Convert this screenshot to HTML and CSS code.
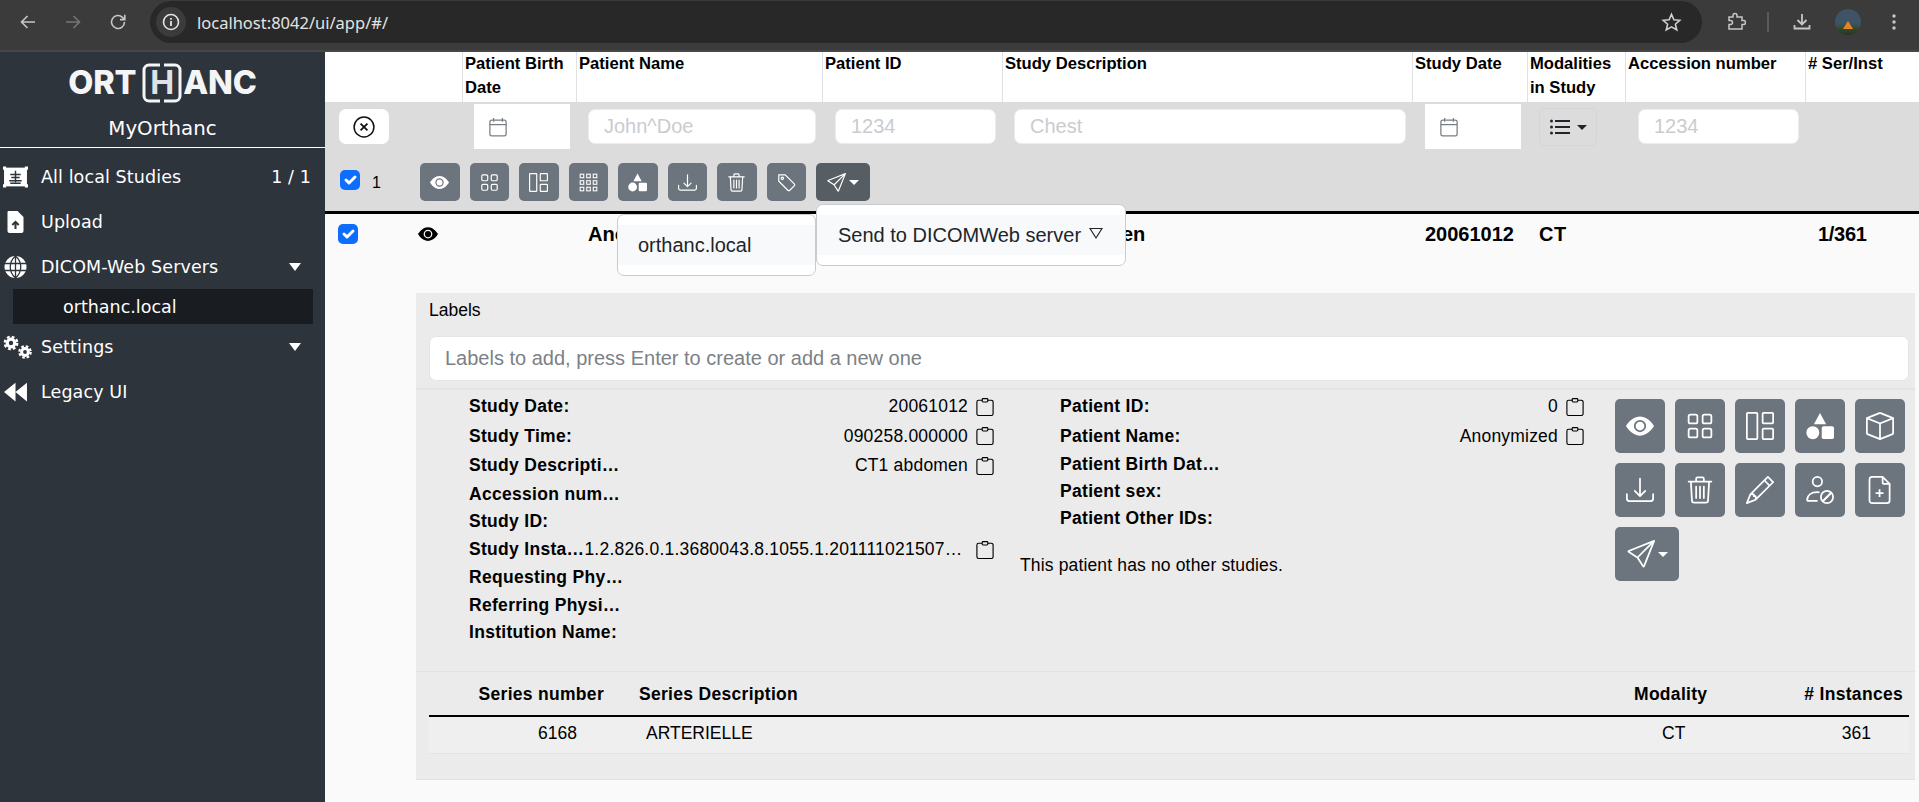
FILE: index.html
```html
<!DOCTYPE html>
<html lang="en">
<head>
<meta charset="utf-8">
<title>Orthanc</title>
<link rel="stylesheet" href="styles.css">
</head>
<body>
<svg class="defs" width="0" height="0">
  <defs>
    <symbol id="i-eye" viewBox="0 0 16 16"><path fill="currentColor" d="M10.5 8a2.5 2.5 0 1 1-5 0 2.5 2.5 0 0 1 5 0z"/><path fill="currentColor" d="M0 8s3-5.5 8-5.500S16 8 16 8s-3 5.500-8 5.500S0 8 0 8zm8 3.500a3.500 3.500 0 1 0 0-7 3.500 3.500 0 0 0 0 7z"/></symbol>
    <symbol id="i-grid" viewBox="0 0 16 16"><g fill="none" stroke="currentColor"><rect x="1.500" y="1.500" width="5" height="5" rx="1"/><rect x="9.500" y="1.500" width="5" height="5" rx="1"/><rect x="1.500" y="9.500" width="5" height="5" rx="1"/><rect x="9.500" y="9.500" width="5" height="5" rx="1"/></g></symbol>
    <symbol id="i-layout" viewBox="0 0 16 16"><g fill="none" stroke="currentColor"><rect x=".5" y=".5" width="6" height="15" rx=".5"/><rect x="9.500" y=".5" width="6" height="6" rx=".5"/><rect x="9.500" y="9.500" width="6" height="6" rx=".5"/></g></symbol>
    <symbol id="i-grid3" viewBox="0 0 16 16"><g fill="none" stroke="currentColor" stroke-width=".9"><rect x="1" y="1" width="3" height="3"/><rect x="6.500" y="1" width="3" height="3"/><rect x="12" y="1" width="3" height="3"/><rect x="1" y="6.500" width="3" height="3"/><rect x="6.500" y="6.500" width="3" height="3"/><rect x="12" y="6.500" width="3" height="3"/><rect x="1" y="12" width="3" height="3"/><rect x="6.500" y="12" width="3" height="3"/><rect x="12" y="12" width="3" height="3"/></g></symbol>
    <symbol id="i-shapes" viewBox="0 0 16 16"><g fill="currentColor"><path d="M8 .5 11.500 7h-7z"/><circle cx="3.900" cy="11.800" r="3.700"/><rect x="9" y="8.200" width="7" height="7.200" rx="1"/></g></symbol>
    <symbol id="i-cube" viewBox="0 0 16 16"><path fill="currentColor" d="M8.186 1.113a.5.5 0 0 0-.372 0L1.846 3.500 8 5.961 14.154 3.500 8.186 1.113zM15 4.239l-6.500 2.600v7.922l6.500-2.600V4.240zM7.500 14.762V6.838L1 4.239v7.925l6.500 2.600zM7.443.184a1.500 1.500 0 0 1 1.114 0l7.129 2.852A.5.5 0 0 1 16 3.500v8.662a1 1 0 0 1-.629.928l-7.185 2.874a.5.5 0 0 1-.372 0L.63 13.090a1 1 0 0 1-.63-.928V3.500a.5.5 0 0 1 .314-.464L7.443.184z"/></symbol>
    <symbol id="i-download" viewBox="0 0 16 16"><path fill="currentColor" d="M.5 9.900a.5.5 0 0 1 .5.5v2.500a1 1 0 0 0 1 1h12a1 1 0 0 0 1-1v-2.500a.5.5 0 0 1 1 0v2.500a2 2 0 0 1-2 2H2a2 2 0 0 1-2-2v-2.500a.5.5 0 0 1 .5-.5z"/><path fill="currentColor" d="M7.646 11.854a.5.5 0 0 0 .708 0l3-3a.5.5 0 0 0-.708-.708L8.500 10.293V1.500a.5.5 0 0 0-1 0v8.793L5.354 8.146a.5.5 0 1 0-.708.708l3 3z"/></symbol>
    <symbol id="i-trash" viewBox="0 0 16 16"><g fill="none" stroke="currentColor" stroke-linecap="round"><path d="M1.500 3.200h13M5.800 3V1.600c0-.5.3-.8.8-.8h2.800c.5 0 .8.3.8.8V3"/><path d="M2.800 3.400 3.400 14c0 .7.5 1.200 1.200 1.200h6.800c.7 0 1.200-.5 1.200-1.200l.6-10.600"/><path d="M5.800 6v6.600M8 6v6.600M10.200 6v6.600"/></g></symbol>
    <symbol id="i-pencil" viewBox="0 0 16 16"><path fill="currentColor" d="M12.146.146a.5.5 0 0 1 .708 0l3 3a.5.5 0 0 1 0 .708l-10 10a.5.5 0 0 1-.168.11l-5 2a.5.5 0 0 1-.65-.65l2-5a.5.5 0 0 1 .11-.168l10-10zM11.207 2.500 13.500 4.793 14.793 3.500 12.500 1.207 11.207 2.500zm1.586 3L10.500 3.207 4 9.707V10h.5a.5.5 0 0 1 .5.5v.5h.5a.5.5 0 0 1 .5.5v.5h.293l6.500-6.500zm-9.761 5.175-.106.106-1.528 3.821 3.821-1.528.106-.106A.5.5 0 0 1 5 12.500V12h-.5a.5.5 0 0 1-.5-.5V11h-.5a.5.5 0 0 1-.468-.325z"/></symbol>
    <symbol id="i-user" viewBox="0 0 16 16"><g fill="none" stroke="currentColor"><circle cx="6.500" cy="3.200" r="2.700"/><path d="M.6 14.200c0-3.200 2.400-5 5.700-5 .6 0 1 .1 1.400.2M.6 14.200h6"/><circle cx="12" cy="12" r="3.500"/><path d="m9.600 14.400 4.800-4.800" stroke-width="1.200"/></g></symbol>
    <symbol id="i-fileplus" viewBox="0 0 16 16"><g fill="none" stroke="currentColor"><path d="M3.500.5h6l4 4v9.500c0 .8-.7 1.500-1.500 1.500H3.500C2.700 15.500 2 14.800 2 14V2C2 1.200 2.700.5 3.500.5z"/><path d="M9.500.5v3c0 .6.400 1 1 1h3"/><path d="M7.750 7.500v4.500M5.500 9.750H10"/></g></symbol>
    <symbol id="i-tag" viewBox="0 0 16 16"><g fill="none" stroke="currentColor"><path d="M1.500 1.500h5.400l7.600 7.600c.5.500.5 1.200 0 1.700l-3.700 3.700c-.5.500-1.200.5-1.700 0L1.500 6.900z"/><circle cx="4.500" cy="4.500" r="1"/></g></symbol>
    <symbol id="i-send" viewBox="0 0 16 16"><path fill="currentColor" d="M15.854.146a.5.5 0 0 1 .11.54l-5.819 14.547a.75.75 0 0 1-1.329.124l-3.178-4.995L.643 7.184a.75.75 0 0 1 .124-1.330L15.314.037a.5.5 0 0 1 .54.11ZM6.636 10.070l2.761 4.338L14.130 2.576 6.636 10.070Zm6.787-8.201L1.591 6.602l4.339 2.760 7.494-7.493Z"/></symbol>
    <symbol id="i-cal" viewBox="0 0 16 16"><g fill="none" stroke="currentColor"><rect x="1.500" y="2.500" width="13" height="12.500" rx="1.500"/><path d="M1.500 6h13M4.500 .8v3M11.500 .8v3"/></g></symbol>
    <symbol id="i-clip" viewBox="0 0 16 16"><g fill="none" stroke="currentColor"><path d="M5.500 2H2.300C1.500 2 .8 2.700.8 3.500V14c0 .8.700 1.500 1.500 1.500h11.400c.8 0 1.500-.7 1.500-1.500V3.500c0-.8-.7-1.500-1.500-1.500h-3.200"/><rect x="5.500" y=".5" width="5" height="3" rx=".8"/></g></symbol>
  </defs>
</svg>

<header class="browser">
  <div class="nav-icons">
    <svg class="b-ic" viewBox="0 0 20 20"><path d="M17 10H4M9.500 4 3.500 10l6 6" fill="none" stroke="#c7c7c7" stroke-width="1.600"/></svg>
    <svg class="b-ic" viewBox="0 0 20 20"><path d="M3 10h13M10.500 4l6 6-6 6" fill="none" stroke="#757575" stroke-width="1.600"/></svg>
    <svg class="b-ic" viewBox="0 0 20 20"><path d="M16.500 10a6.500 6.500 0 1 1-2-4.700L16.500 7.300M16.800 2.800v4.800H12" fill="none" stroke="#c7c7c7" stroke-width="1.600"/></svg>
  </div>
  <div class="urlbar">
    <span class="site-info"><svg viewBox="0 0 20 20" class="info-ic"><circle cx="10" cy="10" r="7.500" fill="none" stroke="#e3e3e3" stroke-width="1.600"/><path d="M10 9v5M10 6v1.800" stroke="#e3e3e3" stroke-width="1.800"/></svg></span>
    <span class="url">localhost:8042/ui/app/#/</span>
    <svg class="star" viewBox="0 0 20 20"><path d="m10 2.200 2.300 5.200 5.600.5-4.200 3.700 1.300 5.500L10 14.200l-5 2.900 1.300-5.500L2.100 7.900l5.600-.5z" fill="none" stroke="#d0d0d0" stroke-width="1.500"/></svg>
  </div>
  <div class="br-right">
    <svg class="b-ic" viewBox="0 0 20 20"><path d="M3 5h4V3.500a2 2 0 0 1 4 0V5h5v3.500h1.500a2 2 0 0 1 0 4H16V17H3v-4.500h1.500a2 2 0 0 0 0-4H3z" fill="none" stroke="#c7c7c7" stroke-width="1.500"/></svg>
    <span class="br-sep"></span>
    <svg class="b-ic" viewBox="0 0 20 20"><path d="M10 2v10M5.500 8l4.500 4.500L14.500 8M2.500 13v3.500h15V13" fill="none" stroke="#c7c7c7" stroke-width="1.800"/></svg>
    <span class="avatar"><span class="fire"></span></span>
    <svg class="b-ic dots" viewBox="0 0 20 20"><circle cx="10" cy="4" r="1.700" fill="#c7c7c7"/><circle cx="10" cy="10" r="1.700" fill="#c7c7c7"/><circle cx="10" cy="16" r="1.700" fill="#c7c7c7"/></svg>
  </div>
</header>

<div class="app">
  <aside class="sidebar">
    <div class="logo">
      <span class="logo-t">ORT</span>
      <span class="logo-h">
        <svg class="logo-br" viewBox="0 0 40 40"><path d="M18 2H7a5 5 0 0 0-5 5v26a5 5 0 0 0 5 5h11M22 2h11a5 5 0 0 1 5 5v26a5 5 0 0 1-5 5H22" fill="none" stroke="#f4f5f6" stroke-width="3"/></svg>
        <span class="logo-hl">H</span>
      </span>
      <span class="logo-t">ANC</span>
    </div>
    <div class="site-name">MyOrthanc</div>
    <nav class="menu">
      <a class="item"><svg class="s-ic" viewBox="0 0 24 22"><path fill="#fff" d="M1 2h22v18H1z"/><path fill="#fff" d="M0 1h3v3H0zM21 1h3v3h-3zM0 18h3v3H0zM21 18h3v3h-3z"/><path d="M12 5v11M7 8.500h10M8 11.500h8M6 14.500h12M7 17h10" stroke="#2e343c" stroke-width="1.400" fill="none"/></svg><span class="grow">All local Studies</span><span>1 / 1</span></a>
      <a class="item"><svg class="s-ic" viewBox="0 0 22 24"><path fill="#fff" d="M4 1h9l6 6v14c0 1-1 2-2 2H5c-1 0-2-1-2-2V3c0-1 0-2 1-2z"/><path d="M11 19v-7M7.800 15l3.200-3.200 3.200 3.200" fill="none" stroke="#2e343c" stroke-width="2"/></svg><span class="grow">Upload</span></a>
      <a class="item"><svg class="s-ic" viewBox="0 0 24 24"><circle cx="12" cy="12" r="11" fill="#fff"/><path d="M1 8.500h22M1 15.500h22M12 1v22M12 1c-7 6-7 16 0 22M12 1c7 6 7 16 0 22" fill="none" stroke="#2e343c" stroke-width="1.300"/></svg><span class="grow">DICOM-Web Servers</span><span class="caret"></span></a>
      <a class="sub">orthanc.local</a>
      <a class="item"><svg class="s-ic cogs" viewBox="0 0 30 24"><g fill="none" stroke="#fff"><circle cx="8" cy="8" r="3.800" stroke-width="3.200"/><circle cx="8" cy="8" r="6.200" stroke-width="2.400" stroke-dasharray="2.800 2.070"/><circle cx="22" cy="17" r="3.400" stroke-width="3"/><circle cx="22" cy="17" r="5.700" stroke-width="2.200" stroke-dasharray="2.600 1.880"/></g></svg><span class="grow">Settings</span><span class="caret"></span></a>
      <a class="item"><svg class="s-ic" viewBox="0 0 24 20"><path fill="#fff" d="M12 1v18L1 10zM23 1v18L12 10z"/></svg><span class="grow">Legacy UI</span></a>
    </nav>
  </aside>

  <main class="main">
    <div class="cols head">
      <div class="h"></div><div class="h">Patient Birth Date</div><div class="h">Patient Name</div><div class="h">Patient ID</div><div class="h">Study Description</div><div class="h">Study Date</div><div class="h">Modalities in Study</div><div class="h">Accession number</div><div class="h"># Ser/Inst</div>
    </div>

    <div class="filters">
      <div class="cols filter-row">
        <div class="f f-clear"><button class="clear"><svg width="22" height="22" viewBox="0 0 16 16"><circle cx="8" cy="8" r="7.200" fill="none" stroke="#111" stroke-width="1.100"/><path d="m5.500 5.500 5 5M10.500 5.500l-5 5" stroke="#111" stroke-width="1.300"/></svg></button></div>
        <div class="f f-date"><div class="date"><svg class="cal"><use href="#i-cal"/></svg></div></div>
        <div class="f f-in"><input class="inp" placeholder="John^Doe"></div>
        <div class="f f-in"><input class="inp" placeholder="1234"></div>
        <div class="f f-in"><input class="inp" placeholder="Chest"></div>
        <div class="f f-date f-date2"><div class="date"><svg class="cal"><use href="#i-cal"/></svg></div></div>
        <div class="f f-mod"><button class="mod"><svg width="20" height="18" viewBox="0 0 16 14"><path d="M4 2.200h12M4 7h12M4 11.800h12" stroke="#212529" stroke-width="1.700"/><circle cx="1.200" cy="2.200" r="1.200" fill="#212529"/><circle cx="1.200" cy="7" r="1.200" fill="#212529"/><circle cx="1.200" cy="11.800" r="1.200" fill="#212529"/></svg><span class="tri dark"></span></button></div>
        <div class="f f-acc"><input class="inp" placeholder="1234"></div>
        <div></div>
      </div>
      <div class="toolbar">
        <span class="check sel-all"></span><span class="count">1</span>
        <div class="tbtns">
          <button class="btn"><svg class="ti"><use href="#i-eye"/></svg></button>
          <button class="btn"><svg class="ti"><use href="#i-grid"/></svg></button>
          <button class="btn"><svg class="ti"><use href="#i-layout"/></svg></button>
          <button class="btn"><svg class="ti"><use href="#i-grid3"/></svg></button>
          <button class="btn"><svg class="ti"><use href="#i-shapes"/></svg></button>
          <button class="btn"><svg class="ti"><use href="#i-download"/></svg></button>
          <button class="btn"><svg class="ti"><use href="#i-trash"/></svg></button>
          <button class="btn"><svg class="ti"><use href="#i-tag"/></svg></button>
          <button class="btn btn-send active"><svg class="ti"><use href="#i-send"/></svg><span class="tri"></span></button>
        </div>
      </div>
    </div>

    <div class="study">
      <div class="cols study-row">
        <div class="c-first"><span class="check row-check"></span><svg class="row-eye"><use href="#i-eye"/></svg></div>
        <div></div><div class="pad-a">Anonymized</div><div>0</div><div class="pad-d">CT1 abdomen</div><div class="pad-e">20061012</div><div class="pad-m">CT</div><div></div><div class="pad-s">1/361</div>
      </div>

      <div class="panel">
        <div class="labels-title">Labels</div>
        <input class="labels-in" placeholder="Labels to add, press Enter to create or add a new one">
        <div class="info">
          <div class="study-col">
            <div class="kv"><b>Study Date:</b><span>20061012</span><svg class="clip"><use href="#i-clip"/></svg></div>
            <div class="kv"><b>Study Time:</b><span>090258.000000</span><svg class="clip"><use href="#i-clip"/></svg></div>
            <div class="kv"><b>Study Descripti…</b><span>CT1 abdomen</span><svg class="clip"><use href="#i-clip"/></svg></div>
            <div class="kv short"><b>Accession num…</b></div>
            <div class="kv short"><b>Study ID:</b></div>
            <div class="kv"><b>Study Insta…</b><span class="uid">1.2.826.0.1.3680043.8.1055.1.201111021507…</span><svg class="clip"><use href="#i-clip"/></svg></div>
            <div class="kv short"><b>Requesting Phy…</b></div>
            <div class="kv short"><b>Referring Physi…</b></div>
            <div class="kv short"><b>Institution Name:</b></div>
          </div>
          <div class="patient-col">
            <div class="kv"><b>Patient ID:</b><span>0</span><svg class="clip"><use href="#i-clip"/></svg></div>
            <div class="kv"><b>Patient Name:</b><span>Anonymized</span><svg class="clip"><use href="#i-clip"/></svg></div>
            <div class="kv short"><b>Patient Birth Dat…</b></div>
            <div class="kv short"><b>Patient sex:</b></div>
            <div class="kv short"><b>Patient Other IDs:</b></div>
            <p class="no-other">This patient has no other studies.</p>
          </div>
          <div class="actions">
            <button class="btn big"><svg class="bi"><use href="#i-eye"/></svg></button>
            <button class="btn big"><svg class="bi"><use href="#i-grid"/></svg></button>
            <button class="btn big"><svg class="bi"><use href="#i-layout"/></svg></button>
            <button class="btn big"><svg class="bi"><use href="#i-shapes"/></svg></button>
            <button class="btn big"><svg class="bi"><use href="#i-cube"/></svg></button>
            <button class="btn big"><svg class="bi"><use href="#i-download"/></svg></button>
            <button class="btn big"><svg class="bi"><use href="#i-trash"/></svg></button>
            <button class="btn big"><svg class="bi"><use href="#i-pencil"/></svg></button>
            <button class="btn big"><svg class="bi"><use href="#i-user"/></svg></button>
            <button class="btn big"><svg class="bi"><use href="#i-fileplus"/></svg></button>
            <button class="btn big wide"><svg class="bi"><use href="#i-send"/></svg><span class="tri"></span></button>
          </div>
        </div>
        <div class="series">
          <div class="s-cols s-head"><div class="r">Series number</div><div>Series Description</div><div>Modality</div><div class="r"># Instances</div></div>
          <div class="s-cols s-row"><div class="c-num">6168</div><div class="c-desc">ARTERIELLE</div><div class="c-ct">CT</div><div class="c-inst">361</div></div>
        </div>
      </div>
    </div>

    <div class="menu-a"><div class="menu-i a1">orthanc.local</div></div>
    <div class="menu-b"><div class="menu-i b1">Send to DICOMWeb server<span class="hollow"></span></div></div>
  </main>
</div>
</body>
</html>
```

FILE: styles.css
```css
* { box-sizing: border-box; }
html, body { margin: 0; height: 802px; overflow: hidden; }
body { font-family: "Liberation Sans", Arial, sans-serif; color: #000; background: #fafafa; font-size: 17.5px; }
.defs { position: absolute; }
button { font-family: inherit; }

/* browser chrome */
.browser { height: 52px; background: #3b3b3b; border-bottom: 2px solid #474747; display: flex; align-items: flex-start; }
.nav-icons { width: 150px; height: 44px; display: flex; align-items: center; gap: 25px; padding-left: 18px; }
.b-ic { width: 20px; height: 20px; flex: none; }
.urlbar { width: 1552px; height: 42px; margin-top: 1px; background: #282828; border-radius: 21px; display: flex; align-items: center; padding: 0 20px 0 6px; }
.site-info { width: 30px; height: 30px; border-radius: 50%; background: #3b3b3b; display: flex; align-items: center; justify-content: center; }
.info-ic { width: 20px; height: 20px; }
.url { font-family: "Noto Sans", sans-serif; font-size: 16.5px; color: #e3e3e3; margin-left: 11px; flex: 1; }
.star { width: 21px; height: 21px; }
.br-right { flex: 1; height: 44px; display: flex; align-items: center; padding-left: 24px; gap: 0; }
.br-sep { width: 2px; height: 20px; background: #5a5a5a; margin: 0 23px 0 21px; }
.avatar { width: 26px; height: 26px; border-radius: 50%; margin-left: 23px; background: linear-gradient(#3e5366 0 55%, #35492f 75%, #26331f); display: flex; align-items: center; justify-content: center; }
.fire { border: 5px solid transparent; border-bottom: 8px solid #e8841f; border-top: 0; margin-top: 5px; }
.dots { margin-left: 23px; }

.app { display: flex; height: 750px; }

/* sidebar */
.sidebar { width: 325px; flex: none; background: #2e343c; color: #fff; font-family: "DejaVu Sans", sans-serif; }
.logo { height: 61px; display: flex; justify-content: center; align-items: center; font-family: "Inter", sans-serif; }
.logo-t { font-weight: 800; font-size: 32.500px; color: #f4f5f6; letter-spacing: -.2px; line-height: 40px; }
.logo-h { width: 40px; height: 40px; margin: 0 1px 0 6px; display: grid; place-items: center; }
.logo-br, .logo-hl { grid-area: 1 / 1; }
.logo-br { width: 40px; height: 40px; }
.logo-hl { font-weight: 700; font-size: 32px; line-height: 40px; color: #dfe2e6; }
.site-name { height: 35px; text-align: center; font-size: 19.800px; line-height: 32px; border-bottom: 1px solid #fff; }
.menu { display: flex; flex-direction: column; padding-top: 6px; }
.item { height: 45px; display: flex; align-items: center; padding: 0 14px 0 3px; font-size: 17.500px; letter-spacing: .1px; }
.s-ic { width: 25px; height: 24px; flex: none; margin-right: 13px; }
.cogs { width: 30px; margin-right: 8px; }
.grow { flex: 1; }
.caret { border: 6px solid transparent; border-top: 8px solid #fff; border-bottom: 0; margin-right: 10px; }
.sub { margin: 0 12px 0 13px; height: 35px; background: #191c20; display: flex; align-items: center; padding-left: 50px; font-size: 17.500px; }

/* main */
.main { flex: 1; min-width: 0; position: relative; }
.cols { display: grid; grid-template-columns: 137px 114px 246px 180px 410px 115px 98px 180px 114px; }
.head { height: 50px; background: #fff; font-weight: 700; font-size: 16.600px; line-height: 24px; }
.h { padding: 0 2px; border-left: 1px solid #dee2e6; }
.h:first-child { border-left: 0; }

.filters { height: 112px; background: #dcdcdc; border-bottom: 3px solid #000; }
.filter-row { height: 52px; }
.f { display: flex; align-items: flex-start; }
.f-clear { padding: 7px 0 0 14px; }
.clear { width: 50px; height: 35px; border: 0; background: #fff; border-radius: 7px; padding: 0; display: flex; align-items: center; justify-content: center; }
.f-date { padding: 2px 0 0 12px; }
.f-date2 { padding-left: 13px; }
.date { width: 96px; height: 45px; background: #fff; display: flex; align-items: center; padding-left: 14px; }
.cal { width: 20px; height: 20px; color: #7a7f85; }
.f-in { padding: 7px 0 0 12px; }
.f-in:nth-child(4) { padding-left: 13px; }
.f-in:nth-child(5) { padding-left: 12px; }
.f-in .inp { width: 228px; }
.f-in:nth-child(4) .inp { width: 161px; }
.f-in:nth-child(5) .inp { width: 392px; }
.f-mod { padding: 6px 0 0 12px; }
.mod { width: 58px; height: 38px; background: transparent; border: 1px solid #d6d6d6; border-radius: 5px; display: flex; align-items: center; justify-content: center; gap: 7px; padding: 0; }
.f-acc { padding: 7px 0 0 13px; }
.f-acc .inp { width: 161px; }
.inp { height: 35px; border: 1px solid #ececec; border-radius: 7px; background: #fff; padding: 0 15px; font: 20px "Liberation Sans", Arial, sans-serif; outline: 0; }
.inp::placeholder { color: #c9ccd0; opacity: 1; }
.tri { display: inline-block; border: 5px solid transparent; border-top: 5px solid #fff; border-bottom: 0; margin-left: 3px; }
.tri.dark { border-top-color: #212529; margin: 0; }

.toolbar { height: 38px; margin-top: 9px; display: flex; align-items: center; padding-left: 15px; }
.check { display: inline-block; width: 20px; height: 20px; border-radius: 5px; background: #0d6efd url("data:image/svg+xml,%3Csvg xmlns='http://www.w3.org/2000/svg' viewBox='0 0 20 20'%3E%3Cpath fill='none' stroke='%23fff' stroke-linecap='round' stroke-linejoin='round' stroke-width='3' d='m6 10 3 3 6-6'/%3E%3C/svg%3E") center / 100% no-repeat; flex: none; }
.sel-all { margin-top: -4px; }
.count { font-size: 16px; margin-left: 12px; width: 48px; padding-top: 2px; }
.tbtns { display: flex; gap: 10px; }
.btn { width: 39.500px; height: 38px; border: 0; border-radius: 5px; background: #6c757d; color: #fff; padding: 0; display: flex; align-items: center; justify-content: center; flex: none; }
.btn .ti { width: 19px; height: 19px; }
.btn-send { width: 54px; }
.active { background: #565e64; }

.study { height: 585px; }
.study-row { height: 79px; padding-top: 7px; font-weight: 700; font-size: 20px; line-height: 26px; }
.c-first { display: flex; align-items: center; height: 26px; padding-left: 13px; }
.row-eye { width: 20px; height: 20px; margin-left: 60px; }
.pad-a { padding-left: 12px; }
.pad-d { padding-left: 11px; }
.pad-e { padding-left: 13px; }
.pad-m { padding-left: 12px; letter-spacing: .5px; }
.pad-s { padding-left: 13px; letter-spacing: -.3px; }

.panel { margin: 0 4px 0 91px; height: 487px; background: #ebebeb; border-bottom: 1px solid #e1e3e8; padding: 5px 6px 0 13px; }
.labels-title { height: 38px; line-height: 24px; }
.labels-in { display: block; width: 1480px; height: 45px; border: 1px solid #e5e5e5; border-radius: 7px; background: #fff; padding: 0 15px; font: 20px "Liberation Sans", Arial, sans-serif; outline: 0; }
.labels-in::placeholder { color: #7b8186; opacity: 1; }

.info { margin: 7px -6px 0 -13px; height: 284px; border-top: 2px solid #e1e3e8; border-bottom: 1px solid #e1e3e8; display: grid; grid-template-columns: 580px 603px 1fr; padding-top: 2px; }
.study-col { padding: 0 2px 0 53px; }
.patient-col { padding-left: 64px; padding-right: 15px; }
.kv { height: 29.500px; display: flex; align-items: center; font-size: 17.500px; }
.kv.short { height: 27.200px; }
.kv b { flex: 1; white-space: nowrap; letter-spacing: .3px; }
.kv span { white-space: nowrap; letter-spacing: .2px; }
.study-col .kv:has(.uid) b { flex: none; }
.study-col .kv:has(.uid) span { flex: 1; letter-spacing: .22px; }
.clip { width: 18px; height: 18px; margin-left: 8px; color: #000; flex: none; }
.no-other { margin: 19px 0 0 -40px; font-size: 17.500px; line-height: 26px; letter-spacing: .15px; }
.actions { display: flex; flex-wrap: wrap; align-content: flex-start; gap: 10px; padding: 7px 5px 0 16px; }
.big { width: 50px; height: 54px; }
.bi { width: 28px; height: 28px; flex: none; }
.wide { width: 64px; }

.series { padding-top: 7px; }
.s-cols { display: grid; grid-template-columns: 175px 1030px 155px 120px; }
.s-head { height: 38px; font-weight: 700; font-size: 17.500px; line-height: 30px; border-bottom: 2px solid #000; letter-spacing: .3px; }
.s-row { height: 37px; background: #efefef; border-bottom: 1px solid #e1e3e8; line-height: 33px; font-size: 17.500px; }
.r { text-align: right; }
.s-head > div:nth-child(2) { padding-left: 35px; }
.s-head > div:nth-child(4) { padding-right: 6px; }
.c-num { padding-left: 109px; }
.c-desc { padding-left: 42px; }
.c-ct { padding-left: 28px; }
.c-inst { text-align: right; padding-right: 38px; }

/* dropdowns over the row */
.menu-a, .menu-b { position: absolute; background: #fff; border: 1px solid #c9cbce; border-radius: 7px; display: flex; align-items: center; font-size: 20px; color: #212529; }
.menu-a { left: 292px; top: 162px; width: 199px; height: 62px; }
.menu-b { left: 491px; top: 152px; width: 310px; height: 62px; }
.menu-i { width: 100%; height: 40px; background: #f8f9fa; display: flex; align-items: center; }
.a1 { padding-left: 20px; }
.b1 { padding-left: 21px; }
.hollow { width: 0; height: 0; margin-left: 8px; margin-top: -4px; border: 7px solid transparent; border-top: 11px solid #212529; border-bottom: 0; position: relative; }
.hollow::after { content: ""; position: absolute; left: -5px; top: -10px; border: 5px solid transparent; border-top: 8px solid #f8f9fa; border-bottom: 0; }
```
